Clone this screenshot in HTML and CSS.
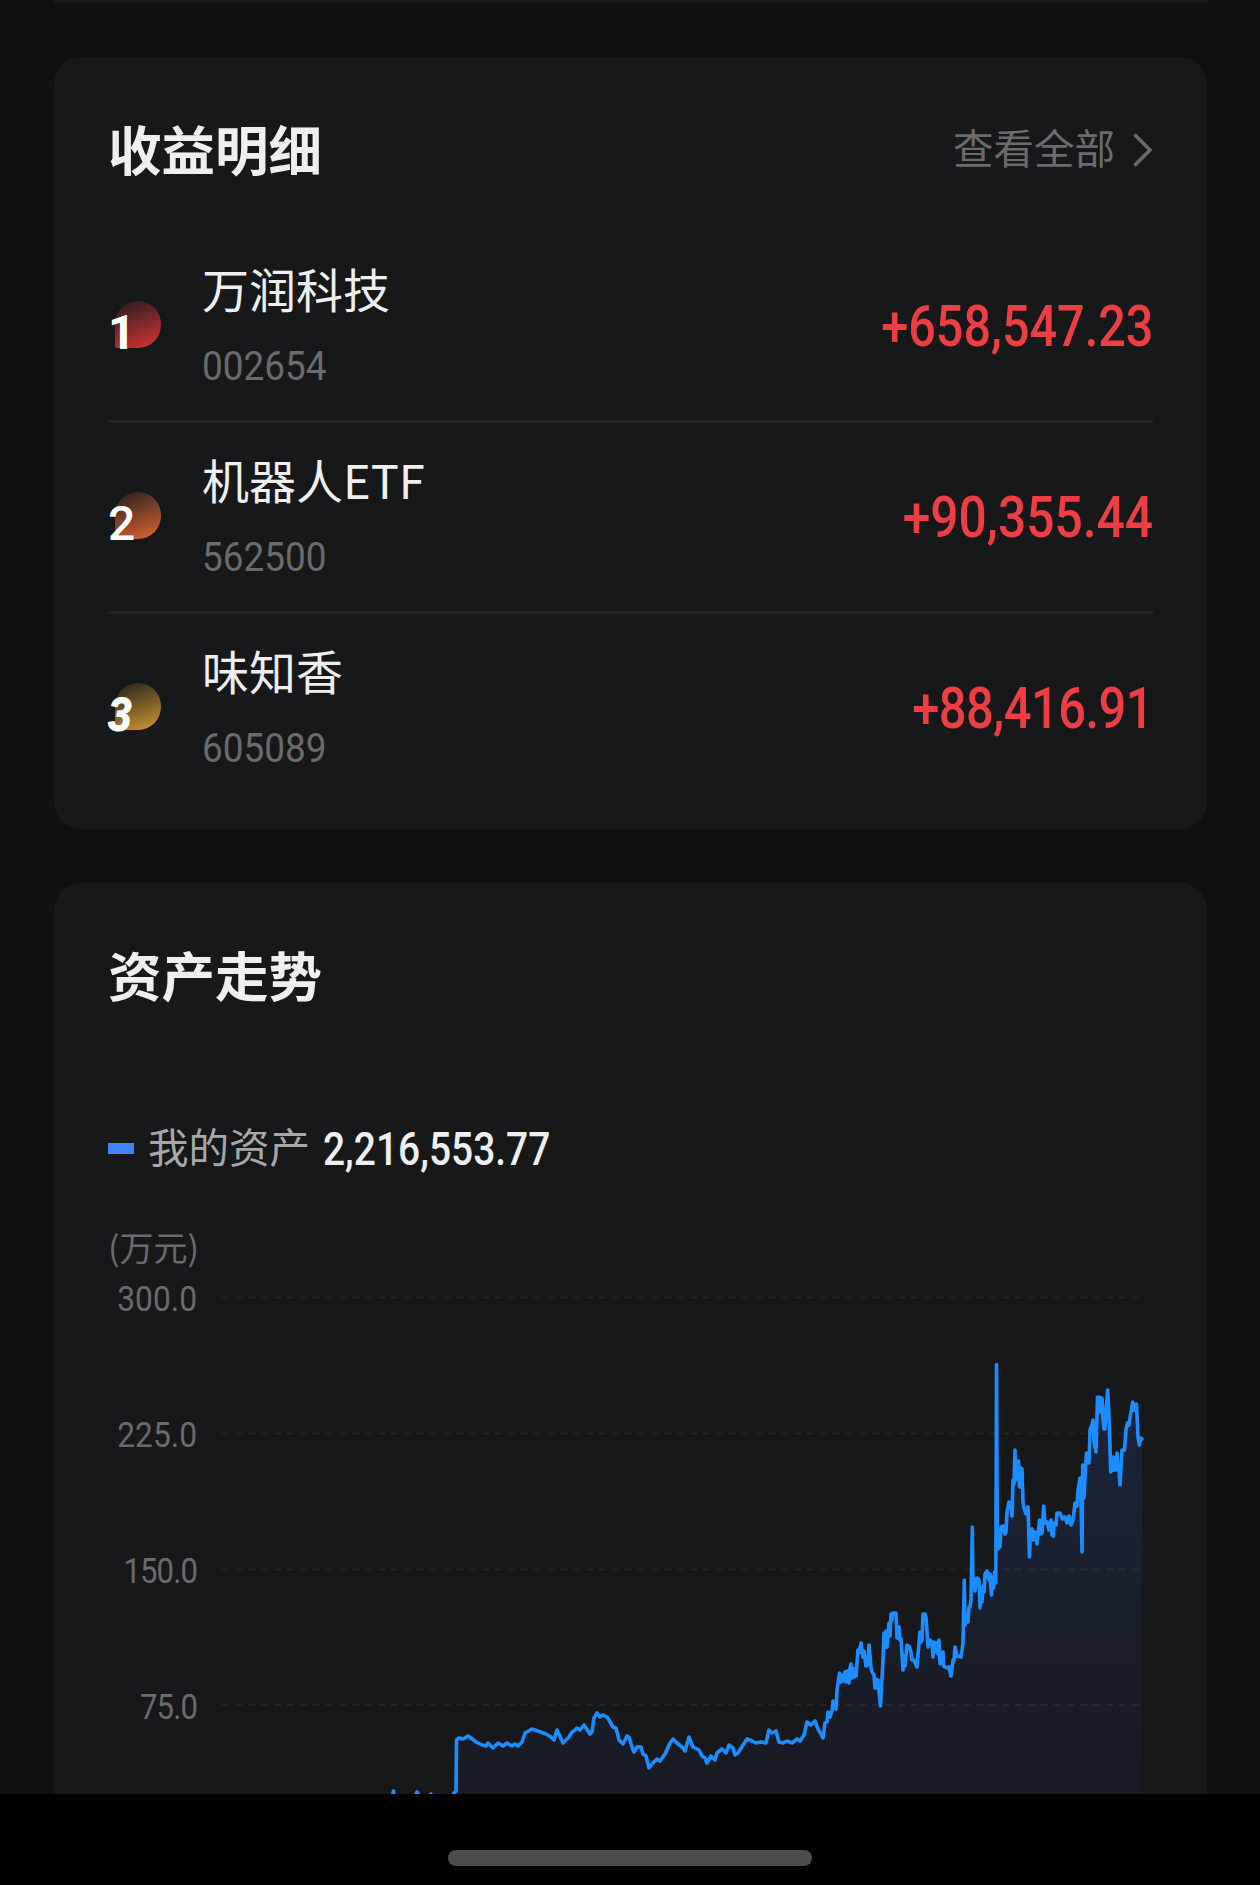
FILE: index.html
```html
<!DOCTYPE html>
<html lang="zh-CN">

<head>
    <meta charset="UTF-8">
    <meta name="viewport" content="width=device-width, initial-scale=1.0">
    <title>收益明细</title>
    <link rel="stylesheet" href="styles.css">
</head>

<body>
    <main class="screen">
        <div class="prev-card"></div>

        <section class="card profit-card">
            <div class="card-header">
                <h2>收益明细</h2>
                <a class="view-all">
                    <span>查看全部</span>
                    <svg class="chevron" width="20" height="36" viewBox="0 0 20 36">
                        <path d="M1.5 2.5L17 18L1.5 33.5" />
                    </svg>
                </a>
            </div>
            <ul class="stock-list">
                <li class="stock">
                    <div class="rank rank-1"><span>1</span></div>
                    <div class="stock-info">
                        <div class="stock-name">万润科技</div>
                        <div class="stock-code">002654</div>
                    </div>
                    <div class="amount amount-long">+658,547.23</div>
                </li>
                <li class="stock">
                    <div class="rank rank-2"><span>2</span></div>
                    <div class="stock-info">
                        <div class="stock-name">机器人ETF</div>
                        <div class="stock-code">562500</div>
                    </div>
                    <div class="amount">+90,355.44</div>
                </li>
                <li class="stock">
                    <div class="rank rank-3"><span>3</span></div>
                    <div class="stock-info">
                        <div class="stock-name">味知香</div>
                        <div class="stock-code">605089</div>
                    </div>
                    <div class="amount amount-tight">+88,416.91</div>
                </li>
            </ul>
        </section>

        <section class="card trend-card">
            <div class="card-header">
                <h2>资产走势</h2>
            </div>
            <div class="legend">
                <i class="legend-mark"></i>
                <span class="legend-label">我的资产</span>
                <span class="legend-value">2,216,553.77</span>
            </div>
            <div class="unit">(万元)</div>
            <div class="chart">
                <div class="y-axis">
                    <span>300.0</span>
                    <span>225.0</span>
                    <span class="tight">150.0</span>
                    <span class="tight">75.0</span>
                </div>
                <svg class="plot" width="931" height="540" viewBox="222 1274 931 540">
                    <defs>
                        <linearGradient id="areaFill" gradientUnits="userSpaceOnUse" x1="0" y1="1364" x2="0" y2="1830">
                            <stop offset="0" stop-color="#3d6cff" stop-opacity="0.15" />
                            <stop offset="1" stop-color="#3d6cff" stop-opacity="0.02" />
                        </linearGradient>
                    </defs>
                    <g class="grid">
                        <line x1="222" y1="1297.5" x2="1141" y2="1297.5" />
                        <line x1="222" y1="1433.5" x2="1141" y2="1433.5" />
                        <line x1="222" y1="1569.5" x2="1141" y2="1569.5" />
                        <line x1="222" y1="1705" x2="1141" y2="1705" />
                    </g>
                    <path id="area" fill="url(#areaFill)" />
                    <polyline id="line" class="line" points="
                        390,1806 393.5,1791 395,1806 412,1802 417,1792 420,1797 428,1797 431,1794 434,1802 450,1802 454,1793 456,1791
                        456.5,1740 459,1738 463,1739 468,1736 471,1738 476,1742 482,1745 486,1746 488,1743 493,1748 498,1743 503,1746
                        507,1743 512,1746 515,1744 518,1746 522,1742 525,1733 532,1729 538,1731 546,1734 551,1737 554,1740 557,1730
                        563,1743 569,1737 572,1732 574,1731 577,1728 580,1730 584,1725 590,1734 592,1732 594,1718 597,1713 600,1717
                        603,1715 607,1717 609,1720 613,1727 616,1728 619,1740 623,1744 627,1736 629,1737 632,1747 634,1752 637,1747
                        641,1747 643,1754 646,1756 649,1768 653,1763 657,1759 660,1761 665,1754 670,1743 673,1739 677,1743 682,1747
                        685,1751 689,1737 693,1747 699,1750 702,1756 705,1758 707,1763 711,1756 715,1760 717,1753 722,1749 726,1753
                        729,1745 733,1748 735,1755 738,1753 743,1745 747,1739 752,1741 756,1743 761,1742 766,1743 769,1730 772,1733
                        776,1731 779,1742 783,1743 787,1741 792,1743 797,1739 800,1741 804,1735 807,1722 811,1725 815,1721 818,1729
                        823,1738 825,1723 827,1722 828,1712 830,1717 832,1711 833,1701 834,1708 836,1709 837,1690 839.5,1673 841,1682
                        842,1675 843,1681 845,1672 846,1682 847,1671 849,1683 850,1668 851,1664 852,1678 853,1668 854,1677
                        856,1676 858,1650 859,1653 861,1643 863,1657 864,1651 866,1666 867,1657 868,1665 869,1645 871,1667 872,1672
                        874,1675 875,1688 876,1679 877,1688 878,1680 880.5,1706 883,1660 884,1633 885,1648 886,1631 887,1647
                        889,1623 890,1636 891,1614 892,1620 893,1613 896,1613 897,1638 898,1628 899,1627 900,1640 901,1639
                        903,1670 904,1656 905,1666 907,1645 909,1646 911,1652 912,1660 914,1660 917,1667 918,1655 920,1632 921,1642
                        922,1640 923,1614 925,1614 926,1617 928,1647 930,1640 931,1641 932,1643 933,1657 934,1642 935,1652
                        937,1643 938,1654 939,1640 940,1664 941,1662 943,1652 943.5,1666 945,1667 947,1668 949,1667 951,1676
                        953,1660 954,1661 955,1647 957,1656 961,1657 963,1643 964.3,1580 965,1625 966,1615 967,1618 968,1622
                        969,1607 970,1607 971,1600 972.3,1527 973,1585 974,1578 975,1591 976,1583 977.5,1578 979,1580 980,1608
                        981,1592 982,1602 983,1586 984,1592 985,1574 987,1571 989,1580 990,1574 991.5,1595 992.5,1577 993.5,1588
                        994.5,1572 995.8,1583 996.5,1364.5 997.3,1540 998,1549 999,1537 1000,1547 1001,1527 1003,1526 1005,1534
                        1006,1532 1007,1512 1009,1502 1011,1504 1012,1516 1013,1480 1014,1484 1015,1450 1016,1480 1017,1465
                        1018.5,1461 1019.5,1487 1021,1468 1022,1469 1023,1502 1024,1508 1026,1514 1028,1507 1029.5,1557
                        1030.5,1530 1032,1529 1033,1540 1035,1532 1037,1544 1038,1535 1039.5,1520 1041,1534 1042,1533
                        1043.7,1506 1045,1523 1047,1522 1049,1530 1051,1520 1052,1535 1053.5,1536 1054,1523 1056,1525 1057,1513
                        1060,1513 1062.5,1519 1065,1517 1067,1523 1069,1516 1071,1525 1073,1520 1075,1503 1077,1506 1078,1491
                        1080,1478 1081,1500 1082,1552 1082.7,1465 1084,1498 1085,1477 1086.5,1453 1088,1463 1089,1463 1090,1430
                        1092,1425 1093,1420 1094,1442 1096,1452 1097.5,1397 1098.5,1412 1099.5,1397 1101,1412 1102,1398
                        1103,1420 1104,1429 1105,1429 1106,1410 1107.7,1390 1108.7,1410 1109.5,1430 1110.7,1472 1112,1470
                        1113,1457 1114,1470 1115,1458 1116,1470 1117,1453 1118,1469 1119,1470 1120,1485 1122,1450 1124.5,1450
                        1126,1430 1127.5,1423 1129,1425 1130,1418 1132.7,1402 1134,1410 1136.5,1404 1138,1437 1139.3,1445
                        1140.7,1438 1142,1439" />
                </svg>
            </div>
        </section>
    </main>

    <div class="nav-bar">
        <div class="home-indicator"></div>
    </div>

    <script>
        const line = document.getElementById('line');
        const area = document.getElementById('area');

        // close the line down to the bottom of the plot
        const points = line.getAttribute('points').trim().split(/\s+/);
        area.setAttribute('d', 'M' + points.join('L') + 'V1814H390Z');
    </script>
</body>

</html>
```
FILE: styles.css
```css
* {
    box-sizing: border-box;
}

body {
    margin: 0;
    width: 1260px;
    height: 1885px;
    overflow: hidden;
    background-color: #0f1012;
    color: #efefef;
    font-family: "Noto Sans CJK SC", sans-serif;
}

.screen {
    height: 1794px;
    padding: 0 53px 0 54px;
    overflow: hidden;
}

.prev-card {
    height: 3px;
    margin-bottom: 54px;
    background-color: #17181a;
}

.card {
    padding: 0 54px;
    border-radius: 27px;
    background-color: #17181a;
}

.profit-card {
    height: 772px;
    margin-bottom: 54px;
}

.trend-card {
    height: 1000px;
}

.card-header {
    display: flex;
    align-items: center;
    justify-content: space-between;
    height: 175px;
    padding-top: 7px;
}

.trend-card .card-header {
    height: 184px;
    padding-top: 0;
    padding-bottom: 3px;
}

h2 {
    margin: 0;
    font-size: 53.5px;
    line-height: 80px;
    font-weight: bold;
    color: #efefef;
}

.view-all {
    display: flex;
    align-items: center;
    gap: 18px;
    font-size: 40.5px;
    line-height: 60px;
    color: #6b6b6c;
}

.view-all span {
    margin-top: -2px;
}

.chevron {
    margin-top: 3px;
    fill: none;
    stroke: #6b6b6c;
    stroke-width: 3.6;
}

.stock-list {
    margin: 0;
    padding: 0;
    list-style: none;
}

.stock {
    display: flex;
    align-items: center;
    height: 191px;
    border-bottom: 3px solid #242527;
}

.stock:last-child {
    border-bottom-color: transparent;
}

.rank {
    display: flex;
    align-items: flex-end;
    width: 46px;
    height: 47px;
    margin: -4px 41px 0 7px;
    border-radius: 23px 23px 23px 2px;
}

.rank span {
    margin: 0 0 -8px -7px;
    font-family: Roboto, sans-serif;
    font-size: 48px;
    font-weight: 500;
    line-height: 47px;
    color: #ffffff;
}

.rank-1 {
    background: linear-gradient(160deg, #2a1e20 5%, #c93034 90%);
}

.rank-1 span {
    font-weight: bold;
}

.rank-2 {
    background: linear-gradient(160deg, #2c2220 5%, #cf5f30 90%);
}

.rank-3 {
    background: linear-gradient(160deg, #29241c 5%, #c08e30 90%);
}

.rank-3 span {
    font-family: "Liberation Sans", sans-serif;
    font-weight: bold;
    font-style: italic;
    transform: scaleX(0.88);
    transform-origin: left;
    -webkit-text-stroke: 1px #ffffff;
}

.stock-info {
    display: flex;
    flex-direction: column;
    gap: 23px;
    flex: 1;
    margin-top: -3px;
}

.stock-name {
    font-size: 47px;
    line-height: 60px;
}

.stock-code,
.amount,
.legend-value,
.y-axis span {
    font-family: Roboto, sans-serif;
    white-space: nowrap;
}

.stock-code {
    font-size: 41px;
    line-height: 50px;
    color: #6b6b6c;
    transform: scaleX(0.9);
    transform-origin: left;
}

.amount {
    font-size: 57px;
    font-weight: 500;
    color: #ee3e44;
    transform: scaleX(0.872);
    transform-origin: right;
}

.amount-long {
    transform: scaleX(0.852);
}

.amount-tight {
    letter-spacing: -0.6px;
    transform: scaleX(0.857);
}

.legend {
    display: flex;
    align-items: center;
    height: 60px;
    margin-top: 51px;
}

.legend-mark {
    width: 26px;
    height: 11px;
    margin-right: 14px;
    background-color: #4482fb;
}

.legend-label {
    margin: -4px 13px 0 0;
    font-size: 40.5px;
    line-height: 60px;
    color: #a8a8a9;
}

.legend-value {
    margin-top: 2px;
    font-size: 46.5px;
    font-weight: 500;
    transform: scaleX(0.837);
    transform-origin: left;
}

.unit {
    margin-top: 46px;
    font-size: 34px;
    line-height: 46px;
    color: #6b6b6c;
}

.chart {
    display: flex;
    margin-top: 4px;
}

.y-axis {
    display: flex;
    flex-direction: column;
    gap: 96px;
    width: 114px;
    padding: 5px 25px 0 0;
    text-align: right;
}

.y-axis span {
    font-size: 34.5px;
    line-height: 40px;
    color: #6b6b6c;
    transform: scaleX(0.92);
    transform-origin: right;
}

.y-axis .tight {
    letter-spacing: -1px;
    transform: scaleX(0.9);
}

.plot {
    flex: none;
}

.grid line {
    stroke: #232426;
    stroke-width: 2;
    stroke-dasharray: 7 6;
}

.line {
    fill: none;
    stroke: #1c8dff;
    stroke-width: 3.6;
    stroke-linejoin: round;
    stroke-linecap: round;
}

.nav-bar {
    display: flex;
    justify-content: center;
    height: 91px;
    padding-top: 56px;
    background-color: #000000;
}

.home-indicator {
    width: 364px;
    height: 16px;
    border-radius: 8px;
    background-color: #4d4d4d;
}
```
